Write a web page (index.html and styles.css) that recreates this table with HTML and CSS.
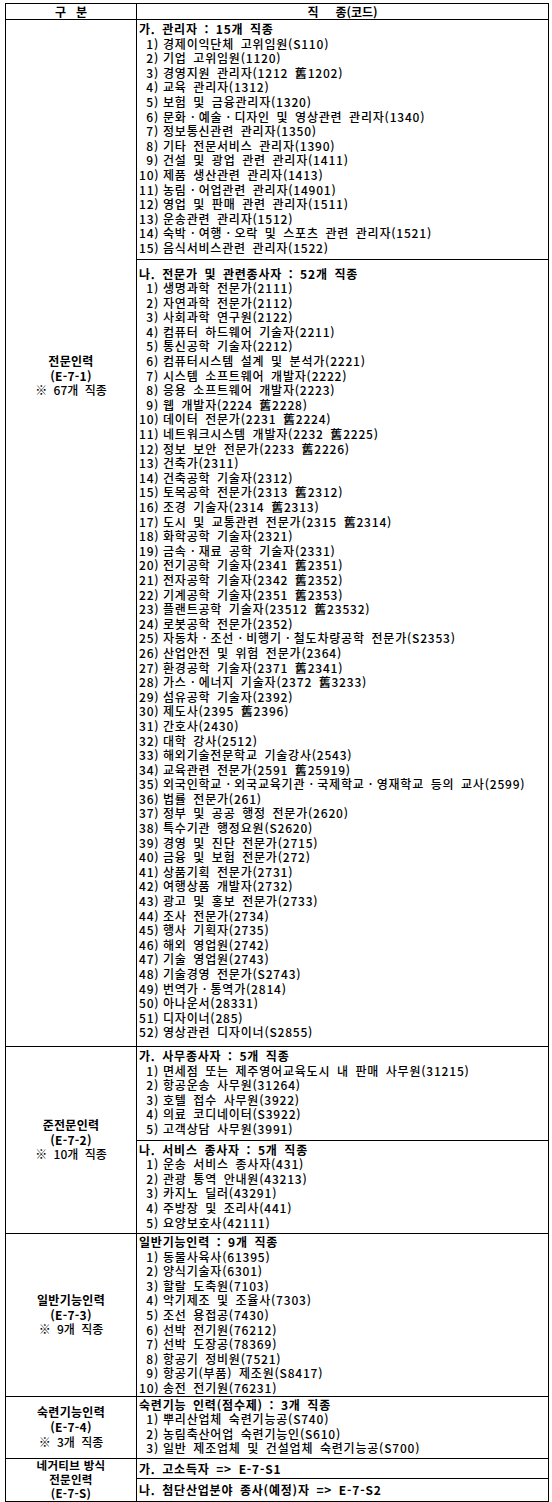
FILE: index.html
```html
<!DOCTYPE html>
<html lang="ko">
<head>
<meta charset="utf-8">
<title>E-7 직종</title>
<link rel="stylesheet" href="styles.css">
</head>
<body>
<table class="jobs">
  <thead>
    <tr>
      <th class="c1"><span class="h1">구</span><span class="h1">분</span></th>
      <th class="c2"><span class="h2">직</span>종(코드)</th>
    </tr>
  </thead>
  <tbody>
    <tr>
      <td class="cat cat-top" rowspan="2">
        <div class="cat-name">전문인력</div>
        <div class="cat-name">(E-7-1)</div>
        <div class="cat-note">※ 67개 직종</div>
      </td>
      <td class="list list-first">
        <div class="head">가. 관리자 : 15개 직종</div>
        <div class="item"><span class="n">1)</span>경제이익단체 고위임원(S110)</div>
        <div class="item"><span class="n">2)</span>기업 고위임원(1120)</div>
        <div class="item"><span class="n">3)</span>경영지원 관리자(1212 舊1202)</div>
        <div class="item"><span class="n">4)</span>교육 관리자(1312)</div>
        <div class="item"><span class="n">5)</span>보험 및 금융관리자(1320)</div>
        <div class="item"><span class="n">6)</span>문화<span class="d">·</span>예술<span class="d">·</span>디자인 및 영상관련 관리자(1340)</div>
        <div class="item"><span class="n">7)</span>정보통신관련 관리자(1350)</div>
        <div class="item"><span class="n">8)</span>기타 전문서비스 관리자(1390)</div>
        <div class="item"><span class="n">9)</span>건설 및 광업 관련 관리자(1411)</div>
        <div class="item"><span class="n">10)</span>제품 생산관련 관리자(1413)</div>
        <div class="item"><span class="n">11)</span>농림<span class="d">·</span>어업관련 관리자(14901)</div>
        <div class="item"><span class="n">12)</span>영업 및 판매 관련 관리자(1511)</div>
        <div class="item"><span class="n">13)</span>운송관련 관리자(1512)</div>
        <div class="item"><span class="n">14)</span>숙박<span class="d">·</span>여행<span class="d">·</span>오락 및 스포츠 관련 관리자(1521)</div>
        <div class="item"><span class="n">15)</span>음식서비스관련 관리자(1522)</div>
      </td>
    </tr>
    <tr>
      <td class="list list-sub list-long">
        <div class="head">나. 전문가 및 관련종사자 : 52개 직종</div>
        <div class="item"><span class="n">1)</span>생명과학 전문가(2111)</div>
        <div class="item"><span class="n">2)</span>자연과학 전문가(2112)</div>
        <div class="item"><span class="n">3)</span>사회과학 연구원(2122)</div>
        <div class="item"><span class="n">4)</span>컴퓨터 하드웨어 기술자(2211)</div>
        <div class="item"><span class="n">5)</span>통신공학 기술자(2212)</div>
        <div class="item"><span class="n">6)</span>컴퓨터시스템 설계 및 분석가(2221)</div>
        <div class="item"><span class="n">7)</span>시스템 소프트웨어 개발자(2222)</div>
        <div class="item"><span class="n">8)</span>응용 소프트웨어 개발자(2223)</div>
        <div class="item"><span class="n">9)</span>웹 개발자(2224 舊2228)</div>
        <div class="item"><span class="n">10)</span>데이터 전문가(2231 舊2224)</div>
        <div class="item"><span class="n">11)</span>네트워크시스템 개발자(2232 舊2225)</div>
        <div class="item"><span class="n">12)</span>정보 보안 전문가(2233 舊2226)</div>
        <div class="item"><span class="n">13)</span>건축가(2311)</div>
        <div class="item"><span class="n">14)</span>건축공학 기술자(2312)</div>
        <div class="item"><span class="n">15)</span>토목공학 전문가(2313 舊2312)</div>
        <div class="item"><span class="n">16)</span>조경 기술자(2314 舊2313)</div>
        <div class="item"><span class="n">17)</span>도시 및 교통관련 전문가(2315 舊2314)</div>
        <div class="item"><span class="n">18)</span>화학공학 기술자(2321)</div>
        <div class="item"><span class="n">19)</span>금속<span class="d">·</span>재료 공학 기술자(2331)</div>
        <div class="item"><span class="n">20)</span>전기공학 기술자(2341 舊2351)</div>
        <div class="item"><span class="n">21)</span>전자공학 기술자(2342 舊2352)</div>
        <div class="item"><span class="n">22)</span>기계공학 기술자(2351 舊2353)</div>
        <div class="item"><span class="n">23)</span>플랜트공학 기술자(23512 舊23532)</div>
        <div class="item"><span class="n">24)</span>로봇공학 전문가(2352)</div>
        <div class="item"><span class="n">25)</span>자동차<span class="d">·</span>조선<span class="d">·</span>비행기<span class="d">·</span>철도차량공학 전문가(S2353)</div>
        <div class="item"><span class="n">26)</span>산업안전 및 위험 전문가(2364)</div>
        <div class="item"><span class="n">27)</span>환경공학 기술자(2371 舊2341)</div>
        <div class="item"><span class="n">28)</span>가스<span class="d">·</span>에너지 기술자(2372 舊3233)</div>
        <div class="item"><span class="n">29)</span>섬유공학 기술자(2392)</div>
        <div class="item"><span class="n">30)</span>제도사(2395 舊2396)</div>
        <div class="item"><span class="n">31)</span>간호사(2430)</div>
        <div class="item"><span class="n">32)</span>대학 강사(2512)</div>
        <div class="item"><span class="n">33)</span>해외기술전문학교 기술강사(2543)</div>
        <div class="item"><span class="n">34)</span>교육관련 전문가(2591 舊25919)</div>
        <div class="item"><span class="n">35)</span>외국인학교<span class="d">·</span>외국교육기관<span class="d">·</span>국제학교<span class="d">·</span>영재학교 등의 교사(2599)</div>
        <div class="item"><span class="n">36)</span>법률 전문가(261)</div>
        <div class="item"><span class="n">37)</span>정부 및 공공 행정 전문가(2620)</div>
        <div class="item"><span class="n">38)</span>특수기관 행정요원(S2620)</div>
        <div class="item"><span class="n">39)</span>경영 및 진단 전문가(2715)</div>
        <div class="item"><span class="n">40)</span>금융 및 보험 전문가(272)</div>
        <div class="item"><span class="n">41)</span>상품기획 전문가(2731)</div>
        <div class="item"><span class="n">42)</span>여행상품 개발자(2732)</div>
        <div class="item"><span class="n">43)</span>광고 및 홍보 전문가(2733)</div>
        <div class="item"><span class="n">44)</span>조사 전문가(2734)</div>
        <div class="item"><span class="n">45)</span>행사 기획자(2735)</div>
        <div class="item"><span class="n">46)</span>해외 영업원(2742)</div>
        <div class="item"><span class="n">47)</span>기술 영업원(2743)</div>
        <div class="item"><span class="n">48)</span>기술경영 전문가(S2743)</div>
        <div class="item"><span class="n">49)</span>번역가<span class="d">·</span>통역가(2814)</div>
        <div class="item"><span class="n">50)</span>아나운서(28331)</div>
        <div class="item"><span class="n">51)</span>디자이너(285)</div>
        <div class="item"><span class="n">52)</span>영상관련 디자이너(S2855)</div>
      </td>
    </tr>
    <tr>
      <td class="cat" rowspan="2">
        <div class="cat-name">준전문인력</div>
        <div class="cat-name">(E-7-2)</div>
        <div class="cat-note">※ 10개 직종</div>
      </td>
      <td class="list list-jun1">
        <div class="head">가. 사무종사자 : 5개 직종</div>
        <div class="item"><span class="n">1)</span>면세점 또는 제주영어교육도시 내 판매 사무원(31215)</div>
        <div class="item"><span class="n">2)</span>항공운송 사무원(31264)</div>
        <div class="item"><span class="n">3)</span>호텔 접수 사무원(3922)</div>
        <div class="item"><span class="n">4)</span>의료 코디네이터(S3922)</div>
        <div class="item"><span class="n">5)</span>고객상담 사무원(3991)</div>
      </td>
    </tr>
    <tr>
      <td class="list list-sub list-jun2">
        <div class="head">나. 서비스 종사자 : 5개 직종</div>
        <div class="item"><span class="n">1)</span>운송 서비스 종사자(431)</div>
        <div class="item"><span class="n">2)</span>관광 통역 안내원(43213)</div>
        <div class="item"><span class="n">3)</span>카지노 딜러(43291)</div>
        <div class="item"><span class="n">4)</span>주방장 및 조리사(441)</div>
        <div class="item"><span class="n">5)</span>요양보호사(42111)</div>
      </td>
    </tr>
    <tr>
      <td class="cat">
        <div class="cat-name">일반기능인력</div>
        <div class="cat-name">(E-7-3)</div>
        <div class="cat-note">※ 9개 직종</div>
      </td>
      <td class="list list-gen">
        <div class="head">일반기능인력 : 9개 직종</div>
        <div class="item"><span class="n">1)</span>동물사육사(61395)</div>
        <div class="item"><span class="n">2)</span>양식기술자(6301)</div>
        <div class="item"><span class="n">3)</span>할랄 도축원(7103)</div>
        <div class="item"><span class="n">4)</span>악기제조 및 조율사(7303)</div>
        <div class="item"><span class="n">5)</span>조선 용접공(7430)</div>
        <div class="item"><span class="n">6)</span>선박 전기원(76212)</div>
        <div class="item"><span class="n">7)</span>선박 도장공(78369)</div>
        <div class="item"><span class="n">8)</span>항공기 정비원(7521)</div>
        <div class="item"><span class="n">9)</span>항공기(부품) 제조원(S8417)</div>
        <div class="item"><span class="n">10)</span>송전 전기원(76231)</div>
      </td>
    </tr>
    <tr>
      <td class="cat">
        <div class="cat-name">숙련기능인력</div>
        <div class="cat-name">(E-7-4)</div>
        <div class="cat-note">※ 3개 직종</div>
      </td>
      <td class="list list-skill">
        <div class="head">숙련기능 인력(점수제) : 3개 직종</div>
        <div class="item"><span class="n">1)</span>뿌리산업체 숙련기능공(S740)</div>
        <div class="item"><span class="n">2)</span>농림축산어업 숙련기능인(S610)</div>
        <div class="item"><span class="n">3)</span>일반 제조업체 및 건설업체 숙련기능공(S700)</div>
      </td>
    </tr>
    <tr>
      <td class="cat cat-neg" rowspan="2">
        <div class="cat-name">네거티브 방식</div>
        <div class="cat-name">전문인력</div>
        <div class="cat-name">(E-7-S)</div>
      </td>
      <td class="list list-neg1">
        <div class="head">가. 고소득자 =&gt; E-7-S1</div>
      </td>
    </tr>
    <tr>
      <td class="list list-sub list-neg2">
        <div class="head">나. 첨단산업분야 종사(예정)자 =&gt; E-7-S2</div>
      </td>
    </tr>
  </tbody>
</table>
</body>
</html>
```

FILE: styles.css
```css
html, body {
  background: #fff;
}
body {
  margin: 3px 0 0 5px;
  font-family: "Noto Sans CJK KR", "Noto Sans", sans-serif;
  font-size: 12px;
  color: #000;
}
.jobs {
  width: 544px;
  border-collapse: collapse;
  border: 1px solid #000;
  table-layout: fixed;
}
.jobs th,
.jobs td {
  border: 1px solid #000;
  padding: 0;
}
.jobs th {
  font-weight: 700;
  line-height: 15px;
  text-align: center;
}
.jobs .c1 {
  width: 130px;
}
.h1 {
  margin: 0 5px;
}
.h2 {
  margin-right: 17px;
}
.jobs .cat {
  text-align: center;
  vertical-align: middle;
  font-size: 12px;
  line-height: 14.6px;
}
.jobs .cat-top {
  vertical-align: top;
  padding-top: 334px;
}
.jobs .cat-neg {
  font-size: 11.5px;
  line-height: 13.6px;
}
.cat-name {
  font-weight: 700;
  letter-spacing: 0.3px;
}
.cat-note {
  font-weight: 500;
  word-spacing: 3px;
}
.jobs .list {
  padding: 2px 0 3px 2px;
  font-size: 12px;
  font-weight: 500;
  line-height: 14.6px;
  letter-spacing: 0.8px;
  word-spacing: 2.5px;
  white-space: nowrap;
  vertical-align: top;
}
.jobs .list-sub {
  border-top: 1px dotted #000;
}
.jobs .list-first { padding-top: 2px; padding-bottom: 3px; }
.jobs .list-long { padding-top: 7px; padding-bottom: 6px; }
.jobs .list-jun1 { padding-top: 2px; padding-bottom: 3px; }
.jobs .list-jun2 { padding-top: 2px; padding-bottom: 3px; }
.jobs .list-gen { padding-top: 1px; padding-bottom: 0; }
.jobs .list-skill { padding-top: 1px; padding-bottom: 2px; }
.jobs .list-neg1 { padding-top: 3px; padding-bottom: 1.5px; }
.jobs .list-neg2 { padding-top: 4px; padding-bottom: 3px; }
.head {
  font-weight: 700;
}
.n {
  display: inline-block;
  width: 20px;
  text-align: right;
  margin-right: 4px;
  word-spacing: 0;
}
.d {
  display: inline-block;
  width: 12px;
  text-align: center;
  letter-spacing: 0;
  word-spacing: 0;
}
```
